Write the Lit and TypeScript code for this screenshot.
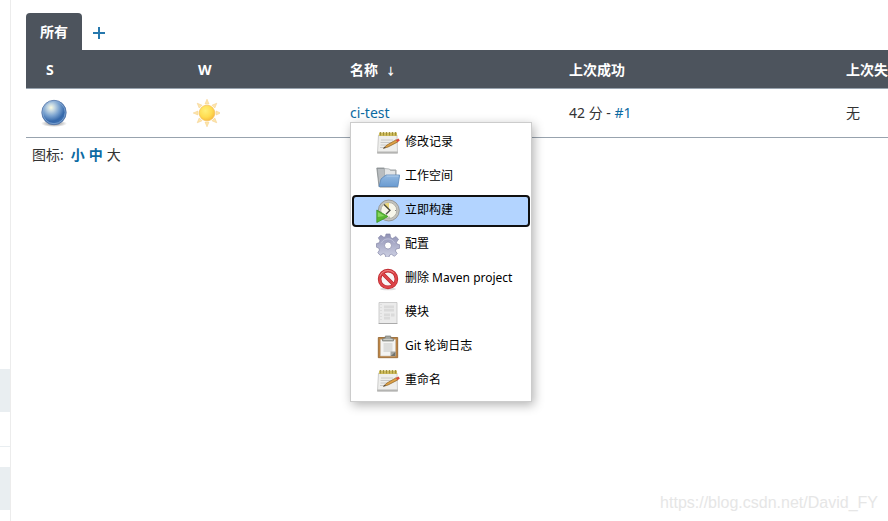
import { LitElement, html, css, svg } from "lit";
import { customElement } from "lit/decorators.js";
import { classMap } from "lit/directives/class-map.js";

const notepad = svg`
  <path d="M2.500 4h18.500l.5 18H1.500z" fill="#eeeeec" stroke="#c2c2c0" stroke-width=".8"/>
  <path d="M1.500 20.500h20l.3 2H1z" fill="#b4b4b2"/>
  <path d="M3 1.500h18V5H3z" fill="#cdbb5c"/>
  <path d="M4.500 1v3.500M7.500 1v3.500M10.500 1v3.500M13.500 1v3.500M16.500 1v3.500M19.500 1v3.500" stroke="#9a8a35" stroke-width=".9"/>
  <path d="M5 9h12M4.500 11.500h11M4.500 14h7M4 16.500h4" stroke="#c4c4c4" stroke-width=".9"/>
  <path d="M7.500 17.200l3.500-3.200L20.300 8.700l1.500 2.200-9.800 5.100z" fill="#dfa145" stroke="#94692c" stroke-width=".8"/>
  <path d="M19.800 8.900l2.700-1.400 1.300 2-2.300 1.700z" fill="#d8493b"/>
  <path d="M7 17.500l1.900-1.800.9 1.200z" fill="#444"/>`;

const icons = {
  notepad,
  folder: svg`
    <path d="M.800 3h7.500L9.500 5H20v16.500H3z" fill="#9ca1a4" stroke="#868b8e" stroke-width=".8"/>
    <path d="M1.800 4h6l1 17H3.500z" fill="#b9bdc0"/>
    <path d="M8.500 3.500l5 .5 1 1.500h5V12h-11z" fill="#e3e5e6" stroke="#a9adb0" stroke-width=".8"/>
    <path d="M5 14L8 11.500 10 10H23.700L21.800 21.700H3z" fill="url(#fold)" stroke="#5a86b8" stroke-width=".8"/>
    <path d="M10.500 11h12" stroke="#bdd5ee" stroke-width=".8"/>
    <path d="M4 22.500h18" stroke="#bbb" stroke-width=".8"/>`,
  clock: svg`
    <circle cx="12.800" cy="11.500" r="10.500" fill="#c3c3be" stroke="#8c8c86" stroke-width=".8"/>
    <circle cx="12.800" cy="11.500" r="8" fill="#f7f6ea" stroke="#a5a59c" stroke-width=".8"/>
    <path d="M13 11.500V3.800A8 8 0 0 0 7.500 6z" fill="#e8d47a"/>
    <path d="M8 5.500l6 5.800-4 4" fill="none" stroke="#4a4a46" stroke-width="1.300"/>
    <path d="M20.300 11.500H19M13 19v-1.500" stroke="#888"/>
    <path d="M.800 11L12 17.500.800 23.500z" fill="#58b732" stroke="#3c9426" stroke-width=".8"/>
    <path d="M1.800 13l6.700 4-6.700 1z" fill="#88d760"/>`,
  gear: svg`
    <g fill="url(#gear)" stroke="#8587a8" stroke-width=".7">
      <path d="M10 1h4l.6 3.600 2 .9L19.800 3.500l2.700 2.700-2.100 3.100.8 1.800 2.300.6v3.600l-3.200.6-.9 2 1.800 2.700-2.700 2.700-3.100-2-1.800.7-.7 2.300H9.800l-.7-2.800-1.900-.8-2.900 1.700-2.500-2.600 1.700-2.800-.7-1.900L.5 14.200v-3.600l2.700-.8.8-2-1.700-3 2.600-2.500 3 2 1.600-.7z"/>
      <circle cx="12" cy="12.500" r="3.500" fill="#fff"/>
    </g>
    <path d="M5.500 10a7.200 7.200 0 0 1 13 0" fill="none" stroke="#c3c6dd" stroke-width=".8"/>`,
  stop: svg`
    <ellipse cx="12" cy="22" rx="8" ry="1.300" fill="#ddd"/>
    <circle cx="12" cy="12" r="8.400" fill="#f8f6f6" stroke="#b9262c" stroke-width="3.600"/>
    <path d="M6 6l12 12" stroke="#b9262c" stroke-width="3.600"/>
    <circle cx="12" cy="12" r="8.400" fill="none" stroke="#dd4549" stroke-width="2.300"/>
    <path d="M6 6l12 12" stroke="#dd4549" stroke-width="2.300"/>
    <path d="M4 9a8.500 8.500 0 0 1 14-3" fill="none" stroke="#f09393" stroke-width=".8"/>`,
  module: svg`
    <path d="M3 1.500h18v21H3z" fill="#ebebeb" stroke="#c3c3c3" stroke-width=".8"/>
    <path d="M5 3v18" stroke="#cfcfcf" stroke-dasharray="1 2"/>
    <path d="M8 4.500h10v6H8zM8 12.500h6v6H8zM15 12.500h3.500v3H15z" fill="#dadada"/>
    <path d="M8 7.500h10M8 15.500h6" stroke="#e6e6e6"/>
    <path d="M2.600 22.500h18.800" stroke="#aaa"/>`,
  clipboard: svg`
    <path d="M2.300 2.500h19.400v20.200H2.300z" fill="#bd8443" stroke="#8e602b" stroke-width=".8"/>
    <path d="M4.500 4.500h15V21h-15z" fill="#f4f4f3" stroke="#c9c3b8" stroke-width=".6"/>
    <path d="M7.500 8h9v9h-9z" fill="#dcdddc"/>
    <path d="M14.500 21v-4.500h5z" fill="#a5a6a2"/>
    <path d="M19.500 16.500V21h-5z" fill="#72736d"/>
    <path d="M6.500 6V3.700l2.800-.6V1h5.400v2.100l2.800.6V6z" fill="#a3a6a1" stroke="#7b7e79" stroke-width=".7"/>
    <path d="M7.500 4.400h9" stroke="#cfd1cc"/>`,
};

interface MenuEntry {
  label: string;
  icon: keyof typeof icons;
  active?: boolean;
}

const entries: MenuEntry[] = [
  { label: "修改记录", icon: "notepad" },
  { label: "工作空间", icon: "folder" },
  { label: "立即构建", icon: "clock", active: true },
  { label: "配置", icon: "gear" },
  { label: "删除 Maven project", icon: "stop" },
  { label: "模块", icon: "module" },
  { label: "Git 轮询日志", icon: "clipboard" },
  { label: "重命名", icon: "notepad" },
];

@customElement("job-menu")
export class JobMenu extends LitElement {
  static styles = css`
    :host {
      display: block;
      box-sizing: border-box;
      padding: 4px 1px;
      background: #fff;
      border: 1px solid #ccc;
      box-shadow: 2px 3px 10px rgba(0, 0, 0, 0.3);
    }
    .list {
      display: flex;
      flex-direction: column;
      gap: 2px;
    }
    .item {
      display: flex;
      align-items: center;
      gap: 5px;
      box-sizing: border-box;
      height: 32px;
      padding: 0 16px 0 22px;
      border: 2px solid transparent;
      border-radius: 4px;
      color: #000;
      font-size: 12px;
      line-height: 16px;
      text-decoration: none;
      white-space: nowrap;
    }
    .active {
      background: #b3d4ff;
      border-color: #101010;
    }
    .icon {
      flex: none;
      width: 24px;
      height: 24px;
    }
    .label {
      padding-bottom: 2px;
    }
  `;

  render() {
    return html`<nav class="list" aria-label="ci-test">
      ${entries.map(
        (e) => html`<a href="#" class=${classMap({ item: true, active: !!e.active })}>
          <svg class="icon" viewBox="0 0 24 24" aria-hidden="true">
            <defs>
              <linearGradient id="fold" x2="0" y2="1">
                <stop stop-color="#93b8e0" /><stop offset="1" stop-color="#6a9bd1" />
              </linearGradient>
              <linearGradient id="gear" x2="0" y2="1">
                <stop stop-color="#9092b5" /><stop offset="1" stop-color="#cdd0e3" />
              </linearGradient>
            </defs>
            ${icons[e.icon]}
          </svg>
          <span class="label">${e.label}</span>
        </a>`
      )}
    </nav>`;
  }
}

@customElement("app-root")
export class AppRoot extends LitElement {
  static styles = css`
    :host {
      display: flex;
      min-height: 100vh;
      overflow: hidden;
      position: relative;
      background: #fff;
      color: #333;
      font-family: "Noto Sans", "Noto Sans CJK SC", sans-serif;
      font-size: 14px;
      line-height: 20px;
    }
    .side {
      flex: none;
      display: flex;
      flex-direction: column;
      justify-content: flex-end;
      box-sizing: border-box;
      width: 11px;
      padding-bottom: 11px;
      border-right: 1px solid #ececec;
    }
    .block {
      height: 43px;
      background: #e9eef1;
    }
    .rule {
      height: 1px;
      margin: 34px 0 20px;
      background: #e9eef1;
    }
    main {
      flex: 1;
      min-width: 0;
      padding: 13px 0 0 15px;
    }
    .tabs {
      display: flex;
      height: 37px;
    }
    .tab,
    .add {
      padding: 0 14px;
      border: 0;
      font: inherit;
    }
    .tab {
      border-radius: 4px 4px 0 0;
      background: #4d545d;
      color: #fff;
      font-weight: 700;
    }
    .add {
      display: flex;
      align-items: center;
      padding: 2px 11px 0;
      background: none;
    }
    .plus {
      width: 12px;
      height: 12px;
    }
    table {
      width: 100%;
      table-layout: fixed;
      border-collapse: separate;
      border-spacing: 0;
    }
    .narrow {
      width: 152px;
    }
    .name {
      width: 219px;
    }
    .success {
      width: 277px;
    }
    th,
    td {
      padding: 0 0 0 20px;
      border-bottom: 1px solid #98a3ae;
      text-align: left;
      white-space: nowrap;
    }
    th {
      height: 36px;
      padding-top: 2px;
      background: #4d545d;
      color: #fff;
    }
    td {
      height: 48px;
    }
    .status {
      padding-left: 14px;
    }
    .ball {
      display: block;
      width: 28px;
      height: 28px;
    }
    .sort {
      margin-left: 4px;
      font-family: "Noto Sans CJK SC", sans-serif;
      font-size: 10px;
      line-height: 12px;
    }
    a {
      color: #0b6aa2;
      text-decoration: none;
    }
    .job {
      position: relative;
      display: inline-block;
    }
    .menu {
      position: absolute;
      z-index: 1;
      top: 19px;
      left: 0;
    }
    .sizes {
      display: flex;
      gap: 4px;
      padding: 7px 6px;
    }
    .sizes a {
      font-weight: 700;
    }
    .caption {
      margin-right: 3px;
    }
    .mark {
      position: absolute;
      right: 10px;
      bottom: 8px;
      color: #e6e6e6;
      font-family: "Liberation Sans", sans-serif;
      font-size: 16px;
    }
  `;

  render() {
    return html`
      <aside class="side">
        <div class="block"></div>
        <div class="rule"></div>
        <div class="block"></div>
      </aside>
      <main>
        <div class="tabs">
          <button class="tab">所有</button>
          <button class="add" aria-label="新建视图">
            <svg class="plus" viewBox="0 0 12 12">
              <path d="M6 0v12M0 6h12" stroke="#2678ad" stroke-width="2" />
            </svg>
          </button>
        </div>
        <table>
          <colgroup>
            <col class="narrow" />
            <col class="narrow" />
            <col class="name" />
            <col class="success" />
            <col />
          </colgroup>
          <thead>
            <tr>
              <th>S</th>
              <th>W</th>
              <th>名称 <span class="sort">↓</span></th>
              <th>上次成功</th>
              <th>上次失败</th>
            </tr>
          </thead>
          <tbody>
            <tr>
              <td class="status">
                <svg class="ball" viewBox="0 0 28 28" aria-hidden="true">
                  <defs>
                    <radialGradient id="blue" cx=".38" cy=".3" r=".68">
                      <stop stop-color="#fbfbe0" />
                      <stop offset=".22" stop-color="#c3d6e2" />
                      <stop offset=".5" stop-color="#7ba3d0" />
                      <stop offset=".82" stop-color="#3568aa" />
                      <stop offset="1" stop-color="#3f72b2" />
                    </radialGradient>
                    <radialGradient id="shade">
                      <stop stop-color="#777" />
                      <stop offset="1" stop-color="#777" stop-opacity="0" />
                    </radialGradient>
                  </defs>
                  <ellipse cx="14" cy="24.500" rx="13" ry="3.500" fill="url(#shade)" />
                  <circle cx="14" cy="13.500" r="12.200" fill="url(#blue)" stroke="#5474a6" stroke-width=".8" />
                  <circle cx="14" cy="13.500" r="11.200" fill="none" stroke="#90b1d8" stroke-width=".7" />
                </svg>
              </td>
              <td class="status">
                <svg class="ball" viewBox="0 0 28 28" aria-hidden="true">
                  <defs>
                    <radialGradient id="sun" cx=".4" cy=".35" r=".7">
                      <stop stop-color="#fff07a" />
                      <stop offset=".6" stop-color="#ffdc50" />
                      <stop offset="1" stop-color="#f6b73c" />
                    </radialGradient>
                  </defs>
                  <g fill="#fde5ac" stroke="#f6d391" stroke-width=".6">
                    ${[0, 45, 90, 135, 180, 225, 270, 315].map(
                      (a) => svg`<path d="M13 5L15 .2L17 5z" transform=${`rotate(${a} 15 14)`} />`
                    )}
                  </g>
                  <circle cx="15" cy="14" r="7.800" fill="url(#sun)" stroke="#f5bf58" stroke-width=".7" />
                </svg>
              </td>
              <td>
                <div class="job"><a href="#">ci-test</a><job-menu class="menu"></job-menu></div>
              </td>
              <td>42 分 - <a href="#">#1</a></td>
              <td>无</td>
            </tr>
          </tbody>
        </table>
        <div class="sizes">
          <span class="caption">图标:</span><a href="#">小</a><a href="#">中</a><span>大</span>
        </div>
      </main>
      <div class="mark">https://blog.csdn.net/David_FY</div>
    `;
  }
}
